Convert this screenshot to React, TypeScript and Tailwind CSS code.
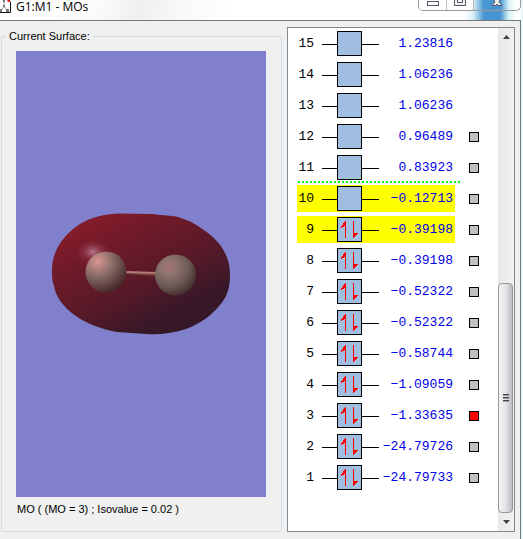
import React from "react";

type Orbital = {
  id: number;
  energy: string;
  occupied: boolean;
  marker?: "grey" | "red";
  highlighted?: boolean;
};

const orbitals: Orbital[] = [
  { id: 15, energy: "1.23816", occupied: false },
  { id: 14, energy: "1.06236", occupied: false },
  { id: 13, energy: "1.06236", occupied: false },
  { id: 12, energy: "0.96489", occupied: false, marker: "grey" },
  { id: 11, energy: "0.83923", occupied: false, marker: "grey" },
  { id: 10, energy: "−0.12713", occupied: false, marker: "grey", highlighted: true },
  { id: 9, energy: "−0.39198", occupied: true, marker: "grey", highlighted: true },
  { id: 8, energy: "−0.39198", occupied: true, marker: "grey" },
  { id: 7, energy: "−0.52322", occupied: true, marker: "grey" },
  { id: 6, energy: "−0.52322", occupied: true, marker: "grey" },
  { id: 5, energy: "−0.58744", occupied: true, marker: "grey" },
  { id: 4, energy: "−1.09059", occupied: true, marker: "grey" },
  { id: 3, energy: "−1.33635", occupied: true, marker: "red" },
  { id: 2, energy: "−24.79726", occupied: true, marker: "grey" },
  { id: 1, energy: "−24.79733", occupied: true, marker: "grey" },
];

function TitleBar() {
  return (
    <header className="flex h-5 shrink-0 items-start bg-[linear-gradient(110deg,#ffffff_0%,#fafafa_20%,#efefef_27%,#f8f8f8_34%,#ffffff_45%,#ffffff_100%)]">
      <svg className="h-[14px] w-3 shrink-0" viewBox="0 0 12 14" aria-hidden="true">
        <path d="M0 0H8L10.500 2V12.500H0" fill="#fff" />
        <path d="M8 0L10.500 2V12.500H0" fill="none" stroke="#111" />
        <path d="M4 1V6M4 6L1 11M4 6L8 11" fill="none" stroke="#9a9a9a" />
        <path d="M3 0H5V2H3ZM0 9H2V12H0ZM6 9H9V12H6ZM3 5H5V7H3Z" fill="#777" />
        <path d="M7 0H10V2H8Z" fill="#e02020" />
      </svg>
      <h1 className="ml-1 flex-1 font-['Open_Sans','Noto_Sans',sans-serif] text-xs leading-[14px] text-black">
        G1:M1 - MOs
      </h1>
      <div className="flex h-full w-[103px] items-start bg-[linear-gradient(90deg,transparent_45%,#d4eff6_54%,#4795d2_64%,#4795d2_80%,#d8f3f8_88%,transparent_95%)]">
        <div className="flex h-[11px] w-[103px] overflow-hidden rounded-b-[5px] border border-t-0 border-[#999]">
          <button aria-label="Minimize" className="flex w-[28px] justify-center border-r border-[#bbb] bg-white/90">
            <svg className="h-[10px] w-[14px]" viewBox="0 0 14 10"><rect x="1.5" y="1.5" width="11" height="4" fill="#fff" stroke="#555566" /></svg>
          </button>
          <button aria-label="Maximize" className="flex w-[27px] justify-center border-r border-[#bbb] bg-white/90">
            <svg className="h-[10px] w-[14px]" viewBox="0 0 14 10"><path d="M1.500 0V5.500H12.500V0M4.500 0V2.500H9.500V0" fill="#eee" stroke="#555566" /></svg>
          </button>
          <button aria-label="Close" className="flex flex-1 justify-center">
            <svg className="h-[10px] w-[14px]" viewBox="0 0 14 10"><path d="M4 0L5 2L2 5.500H6L7 4L8 5.500H12L9 2L10 0" fill="#f4f4f4" stroke="#555566" /></svg>
          </button>
        </div>
      </div>
    </header>
  );
}

function Surface() {
  return (
    <svg
      className="min-h-0 w-full flex-1 bg-[#8080cc]"
      viewBox="16 51 250 446"
      role="img"
      aria-label="Molecular orbital surface"
    >
      <defs>
        <linearGradient id="body" x1="0.1" y1="0.15" x2="0.72" y2="0.95">
          <stop offset="0" stopColor="#831b2a" />
          <stop offset="0.28" stopColor="#6c1a29" />
          <stop offset="0.6" stopColor="#561928" />
          <stop offset="0.88" stopColor="#381828" />
          <stop offset="1" stopColor="#371828" />
        </linearGradient>
        <radialGradient id="shine">
          <stop offset="0" stopColor="#c08098" stopOpacity="0.9" />
          <stop offset="0.5" stopColor="#a05068" stopOpacity="0.4" />
          <stop offset="1" stopColor="#902035" stopOpacity="0" />
        </radialGradient>
        <radialGradient id="atomShade" cx="0.34" cy="0.3" r="0.78">
          <stop offset="0" stopColor="#a67470" />
          <stop offset="0.25" stopColor="#8f736e" />
          <stop offset="0.6" stopColor="#6e5a56" />
          <stop offset="1" stopColor="#3f2929" />
        </radialGradient>
        <radialGradient id="atomBright" cx="0.3" cy="0.24" r="0.8">
          <stop offset="0" stopColor="#dc9691" />
          <stop offset="0.2" stopColor="#b48480" />
          <stop offset="0.55" stopColor="#7b615d" />
          <stop offset="1" stopColor="#472827" />
        </radialGradient>
      </defs>
      <path
        d="M52 270C52 254 60 240 73 229C85 219 101 214 119 213.500L152 214C160 215.500 168 215 176 216.500C186 219 194 223 201 228C212 235 220 243 225 253C229 261 230 268 230 276C230 288 227 297 220 305C212 315 200 324 186 329C174 333 160 335 146 334L117 332C100 329 85 323 73 314C62 305 56 297 54 286C52 281 52 276 52 270Z"
        fill="url(#body)"
      />
      <ellipse cx="93" cy="252" rx="19" ry="13" fill="url(#shine)" />
      <path d="M126 271L157 273V276L126 274Z" fill="#74413e" />
      <path d="M126 271L157 272V274L126 273Z" fill="#b37a74" />
      <circle cx="106" cy="272" r="20.500" fill="url(#atomBright)" />
      <circle cx="175.500" cy="275" r="20.500" fill="url(#atomShade)" />
    </svg>
  );
}

function Level({ occupied }: { occupied: boolean }) {
  return (
    <svg className="ml-2 h-[25px] w-[57px] shrink-0" viewBox="0 0 57 25" aria-hidden="true">
      <path d="M0 13.500H15M40 13.500H57" stroke="#000" />
      <rect x="15.500" y="0.500" width="24" height="24" fill="#a0bfe0" stroke="#000" />
      {occupied && (
        <g fill="#ff0000" shapeRendering="crispEdges">
          <path d="M23 4H24V21H23V9H22V10H20V11H19V9H20V8H21V6H22V5H23Z" />
          <path d="M31 4H32V16H36V17H35V18H34V19H33V20H32V21H31Z" />
        </g>
      )}
    </svg>
  );
}

function OrbitalRow({ orbital }: { orbital: Orbital }) {
  return (
    <li className="flex h-[31px] items-center">
      <div className={`flex h-[27px] w-[158px] items-center ${orbital.highlighted ? "bg-[#ffff00]" : ""}`}>
        <span className="w-[17px] shrink-0 text-right text-black">{orbital.id}</span>
        <Level occupied={orbital.occupied} />
        <span className="-ml-1 flex-1 pr-[2px] text-right text-[#0000e8]">{orbital.energy}</span>
      </div>
      {orbital.marker && (
        <button
          aria-label={`Show orbital ${orbital.id}`}
          className={`ml-[14px] size-[10px] border border-black ${orbital.marker === "red" ? "bg-[#ff0000]" : "bg-[#c0c0c0]"}`}
        />
      )}
    </li>
  );
}

function ScrollBar() {
  return (
    <div className="flex w-4 shrink-0 flex-col bg-gradient-to-r from-[#e8e8e8] to-[#f2f2f2]">
      <button aria-label="Scroll up" className="flex h-[17px] items-center justify-center">
        <svg className="h-1 w-[7px]" viewBox="0 0 7 4"><path d="M0 4L3.500 0L7 4Z" fill="#444" /></svg>
      </button>
      <div className="flex-[239]" />
      <div className="mr-px flex flex-[228] flex-col items-center justify-center gap-px rounded-sm border border-[#979797] bg-gradient-to-r from-[#f5f5f5] via-[#e4e4e9] to-[#bcbcc2]">
        <span className="h-[2px] w-[6px] border-t border-[#444] bg-[#999]" />
        <span className="h-[2px] w-[6px] border-t border-[#444] bg-[#999]" />
        <span className="h-[2px] w-[6px] border-t border-[#444] bg-[#999]" />
      </div>
      <button aria-label="Scroll down" className="flex h-[18px] items-center justify-center">
        <svg className="h-1 w-[7px]" viewBox="0 0 7 4"><path d="M0 0L3.500 4L7 0Z" fill="#444" /></svg>
      </button>
    </div>
  );
}

export default function App() {
  return (
    <div className="flex h-screen min-h-[539px] flex-col bg-[#e6f8fa] pr-[2px] font-['Liberation_Sans',Arial,sans-serif]">
      <TitleBar />
      <main className="flex min-h-0 flex-1 gap-[5px] border-t border-r border-[#707878] bg-[#f0f0f0] pr-[5px] pb-[7px]">
        <fieldset className="mt-2 ml-px flex min-w-0 flex-1 flex-col rounded-[3px] border border-[#d0dde8] pr-[15px] pb-[14px] pl-[14px]">
          <legend className="-ml-[10px] px-[3px] text-[11px] leading-[14px] text-black">Current Surface:</legend>
          <div className="flex min-h-0 flex-1 flex-col pt-2">
            <Surface />
            <p className="mt-1 px-px text-[11px] leading-4 text-black">MO ( (MO = 3) ; Isovalue = 0.02 )</p>
          </div>
        </fieldset>
        <section aria-label="Orbital energies" className="mt-[6px] flex w-[228px] shrink-0 border border-[#828790] bg-white">
          <ol className="flex-1 pl-[9px] font-['Liberation_Mono','Courier_New',monospace] text-[13px] leading-4">
            {orbitals.map((orbital) => (
              <React.Fragment key={orbital.id}>
                {orbital.id === 10 && (
                  <li
                    aria-hidden="true"
                    className="-mt-[2px] ml-px h-[2px] w-[162px] bg-[repeating-linear-gradient(90deg,#00ff00_0_2px,transparent_2px_4px)]"
                  />
                )}
                <OrbitalRow orbital={orbital} />
              </React.Fragment>
            ))}
          </ol>
          <ScrollBar />
        </section>
      </main>
    </div>
  );
}
